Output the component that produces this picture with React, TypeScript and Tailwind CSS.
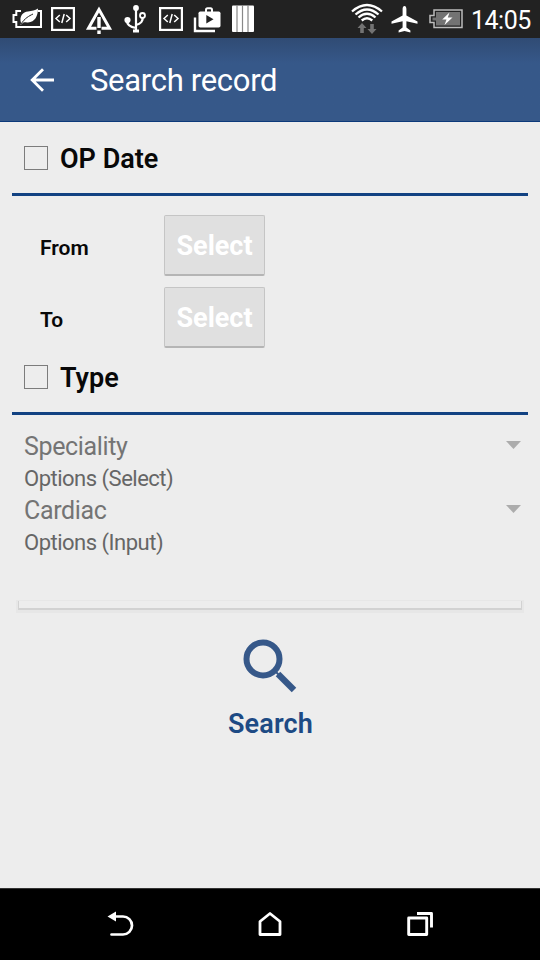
import React from "react";

function CodeIcon() {
  return (
    <svg className="h-[38px] w-6" viewBox="0 0 24 38" fill="none" stroke="#fff">
      <rect x="1.100" y="8.100" width="21.800" height="21.800" strokeWidth="2.200" />
      <path d="M8.800 15L5 18.500l3.800 3.500M15.200 15L19 18.500l-3.800 3.500M13.200 14l-2.400 9" strokeWidth="1.500" />
    </svg>
  );
}

function StatusBar() {
  return (
    <header className="flex h-[38px] items-center bg-[#222222] pl-3 text-white">
      <svg className="h-[38px] w-[30px]" viewBox="0 0 30 38" fill="none">
        <path d="M9 11H4.300v4H1.500v7h2.800v5H29V11h-3" stroke="#fff" strokeWidth="2" />
        <path d="M9 23C7 16 11 12 16 11.500C20 11 23 10.500 26 8.500C26 16 23 22 16 22.500C14 22.700 12.500 22 11.500 22.500L8.500 25Z" fill="#fff" />
        <path d="M9 24C13 18 17 16 21 14" stroke="#222" strokeWidth="1" />
      </svg>
      <div className="ml-[9px] flex"><CodeIcon /></div>
      <svg className="ml-2.5 h-[38px] w-7" viewBox="0 0 28 38" fill="none">
        <path d="M14 9.500L3.500 28.200H24.500Z" stroke="#fff" strokeWidth="3" />
        <path d="M11.500 17h5v17h-5z" fill="#222" />
        <path d="M12.300 17h3.400v11h-3.400zM12.300 30.500h3.400v3.500h-3.400z" fill="#fff" />
      </svg>
      <svg className="ml-[11px] h-[38px] w-6" viewBox="0 0 24 38" fill="none" stroke="#fff" strokeWidth="2.200">
        <path d="M12 9v22M3 21c0 4 3 6 9 7M18.500 17c1 4-2 7-6.500 8" />
        <circle cx="3.500" cy="20" r="2" fill="#fff" />
        <circle cx="18.500" cy="15.500" r="2.500" strokeWidth="1.800" />
        <circle cx="12" cy="8" r="1.800" fill="#fff" />
        <path d="M9 31h6" strokeWidth="3" />
      </svg>
      <div className="ml-[11px] flex"><CodeIcon /></div>
      <svg className="ml-2.5 h-[38px] w-7" viewBox="0 0 28 38" fill="none">
        <path d="M2 17.500V31h20" stroke="#fff" strokeWidth="2.400" />
        <path d="M13 12V10c0-1 .5-1.700 1.500-1.700h3c1 0 1.500.7 1.500 1.700v2" stroke="#fff" strokeWidth="2" />
        <rect x="5.500" y="11.500" width="22" height="16" rx="1.800" fill="#fff" />
        <path d="M13.300 15v8.500l7.200-4.200z" fill="#222" />
      </svg>
      <svg className="ml-[11px] h-[38px] w-[22px]" viewBox="0 0 22 38">
        <rect y="5.500" width="22" height="26.500" rx="1" fill="#fff" />
        <path d="M5 5v27M10.500 5v27M16 5v27" stroke="#888" strokeWidth="1.200" />
      </svg>
      <svg className="ml-[97px] h-[38px] w-8" viewBox="0 0 32 38" fill="none">
        <g stroke="#fff" strokeWidth="2.300">
          <path d="M1 11.500Q16-1.500 31 11.500M4.500 14.500Q16 4.500 27.500 14.500M7.500 17.500Q16 10 24.500 17.500M10.700 20.500Q16 16 21.300 20.500" />
        </g>
        <path d="M11 23l4.500 5h-2.700v5H9.200v-5H6.500zM21 34l4.500-5h-2.700v-5h-3.600v5h-2.700z" fill="#737373" />
      </svg>
      <svg className="ml-2 h-[38px] w-[27px]" viewBox="0 0 27 38">
        <path d="M13.500 6c1.400 0 1.900 1.500 1.900 3v6.500L26.500 21.500v2.300L15.400 21.300v6.200l4 3v2l-5.900-1.500-5.900 1.500v-2l4-3v-6.200L.5 23.800v-2.300l11.100-6V9c0-1.500.5-3 1.900-3z" fill="#fff" />
      </svg>
      <svg className="ml-[11px] h-[38px] w-[34px]" viewBox="0 0 34 38" fill="none">
        <path d="M5 10h28v17.500H5v-5H1v-7h4z" stroke="#bcbcbc" strokeWidth="1.500" />
        <path d="M7 12h24v13.500H7v-5H3.500v-3H7z" fill="#737373" />
        <path d="M20.500 12.500l-7.300 7h4.300l-2 5.500 8-7.500h-4.700z" fill="#fff" />
      </svg>
      <span className="ml-2 mt-[3px] text-[25px] leading-[30px] tracking-[-0.5px]">14:05</span>
    </header>
  );
}

function Section({ title }: { title: string }) {
  return (
    <div className="mx-3 flex h-[74px] items-center border-b-[3px] border-[#124282] pl-3">
      <span className="size-6 border border-[#7c7c7c]" />
      <h2 className="ml-3 mt-[3px] text-[27px] leading-8 font-semibold text-[#080808]">{title}</h2>
    </div>
  );
}

function DateRow({ label }: { label: string }) {
  return (
    <div className="flex h-[72px] items-center pl-10">
      <span className="w-[124px] pt-1.5 text-[21px] leading-6 font-semibold text-[#080808]">{label}</span>
      <button className="h-[61px] w-[101px] rounded-[2px] border border-b-2 border-[#c5c5c5] border-b-[#b5b5b5] bg-[#e0e0e0] pt-[3px] text-[27px] leading-8 font-bold text-white">Select</button>
    </div>
  );
}

function Spinner({ label }: { label: string }) {
  return (
    <div className="flex h-8 items-center justify-between pr-[19px] pl-6">
      <span className="text-[25px] leading-8 tracking-[-0.35px] text-[#747474]">{label}</span>
      <svg className="mb-1 h-2 w-[15px]" viewBox="0 0 15 8"><path d="M0 0h15L7.500 8z" fill="#acacac" /></svg>
    </div>
  );
}

export default function App() {
  return (
    <div className="flex h-[960px] w-[540px] flex-col overflow-hidden bg-[#ededed] font-[Roboto,sans-serif]">
      <StatusBar />
      <div className="flex h-[84px] items-center border-b border-[#0c397a] bg-linear-to-b from-[#304b74] to-[#365889] to-30% pl-[30px] text-white">
        <svg className="h-6 w-6" viewBox="0 0 24 24" fill="none" stroke="#fff" strokeWidth="2.800">
          <path d="M24 12H2.500M13 1.200L2.200 12 13 22.800" />
        </svg>
        <h1 className="ml-9 mt-0.5 text-[31px] leading-9 tracking-[-0.3px]">Search record</h1>
      </div>
      <main className="flex h-[766px] flex-col">
        <Section title="OP Date" />
        <div className="mt-[13px]">
          <DateRow label="From" />
          <DateRow label="To" />
        </div>
        <div className="-mt-3"><Section title="Type" /></div>
        <div className="mt-4">
          <Spinner label="Speciality" />
          <p className="h-8 pl-6 text-[22px] leading-8 tracking-[-0.5px] text-[#666]">Options (Select)</p>
          <Spinner label="Cardiac" />
          <p className="h-8 pl-6 text-[22px] leading-8 tracking-[-0.5px] text-[#666]">Options (Input)</p>
        </div>
        <div className="mx-[18px] mt-[42px] h-[9px] border-x border-b-2 border-[#d2d2d2] shadow-[0_1px_0_2px_#e7e7e7]" />
        <div className="mt-[29px] flex flex-col items-center">
          <svg className="h-[54px] w-[54px]" viewBox="0 0 54 54" fill="none" stroke="#365889">
            <circle cx="20" cy="20" r="16.500" strokeWidth="6" />
            <path d="M35 35L51 51" strokeWidth="6.300" />
            <path d="M30 30l6 6" strokeWidth="2" />
          </svg>
          <span className="mt-[15px] pl-px text-[27px] leading-8 font-semibold tracking-[0.15px] text-[#1d4a84]">Search</span>
        </div>
      </main>
      <nav className="flex h-[72px] items-center justify-center gap-[120px] border-t border-[#333] bg-black">
        <svg className="h-[30px] w-[30px]" viewBox="0 0 30 30" fill="none" stroke="#fff" strokeWidth="2.700">
          <path d="M9 6.500h9a9 9 0 0 1 0 18H6.500" strokeLinecap="round" />
          <path d="M2.500 6.500l8.500-5v10z" fill="#fff" stroke="none" />
        </svg>
        <svg className="h-[30px] w-[30px]" viewBox="0 0 30 30" fill="none" stroke="#fff" strokeWidth="2.800" strokeLinejoin="round">
          <path d="M5 11.500L15 3.500 25 11.500V24.500H5z" />
        </svg>
        <svg className="h-[30px] w-[30px]" viewBox="0 0 30 30" fill="none" stroke="#fff" strokeWidth="2.900" strokeLinejoin="round">
          <rect x="3.700" y="8" width="18" height="16.500" />
          <path d="M12 3.500h14.500V17.500" />
        </svg>
      </nav>
    </div>
  );
}
